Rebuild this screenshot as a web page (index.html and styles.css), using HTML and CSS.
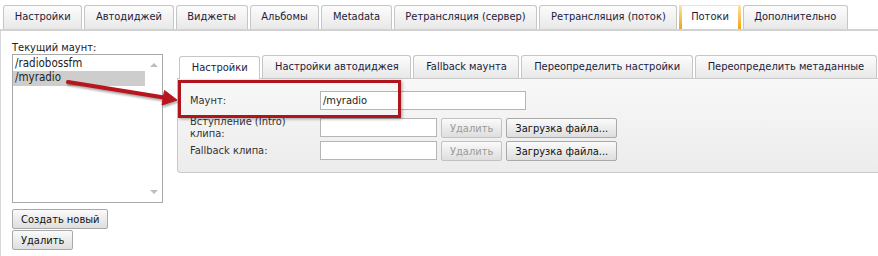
FILE: index.html
```html
<!DOCTYPE html>
<html>
<head>
    <meta charset="utf-8">
    <link rel="stylesheet" href="styles.css">
</head>
<body>
    <div class="page">
        <ul class="tabs main-tabs">
            <li>Настройки</li>
            <li>Автодиджей</li>
            <li>Виджеты</li>
            <li>Альбомы</li>
            <li>Metadata</li>
            <li>Ретрансляция (сервер)</li>
            <li>Ретрансляция (поток)</li>
            <li class="active">Потоки</li>
            <li>Дополнительно</li>
        </ul>

        <div class="tab-body">
            <div class="mounts">
                <div class="mounts-label">Текущий маунт:</div>
                <div class="listbox">
                    <div class="items">
                        <div class="item">/radiobossfm</div>
                        <div class="item selected">/myradio</div>
                    </div>
                    <div class="scroll">
                        <span class="arr up"></span>
                        <span class="arr down"></span>
                    </div>
                </div>
                <button class="btn">Создать новый</button>
                <button class="btn">Удалить</button>
            </div>

            <div class="mount-settings">
                <ul class="tabs sub-tabs">
                    <li class="active">Настройки</li>
                    <li>Настройки автодиджея</li>
                    <li>Fallback маунта</li>
                    <li>Переопределить настройки</li>
                    <li>Переопределить метаданные</li>
                </ul>
                <div class="panel">
                    <div class="row">
                        <label for="mount">Маунт:</label>
                        <input type="text" id="mount" class="wide" value="/myradio">
                    </div>
                    <div class="row">
                        <label for="intro">Вступление (Intro) клипа:</label>
                        <div class="field">
                            <input type="text" id="intro">
                            <button class="btn" disabled>Удалить</button>
                            <button class="btn">Загрузка файла...</button>
                        </div>
                    </div>
                    <div class="row">
                        <label for="fallback">Fallback клипа:</label>
                        <div class="field">
                            <input type="text" id="fallback">
                            <button class="btn" disabled>Удалить</button>
                            <button class="btn">Загрузка файла...</button>
                        </div>
                    </div>
                </div>
            </div>
        </div>

        <!-- annotation over the screenshot -->
        <div class="highlight"></div>
        <svg class="arrow" width="878" height="256" viewBox="0 0 878 256">
            <g fill="#b8161c" stroke="#b8161c">
                <line x1="68" y1="82" x2="164" y2="97.5" stroke-width="4" stroke-linecap="round"/>
                <polygon points="177,100 162,105 164.5,90.5" stroke-width="1" stroke-linejoin="round"/>
            </g>
        </svg>
    </div>
</body>
</html>
```

FILE: styles.css
```css
body {
    margin: 0;
    font-family: "DejaVu Sans Condensed", "DejaVu Sans", Verdana, sans-serif;
    font-size: 11px;
    color: #222;
    background-color: white;
}

.page {
    position: relative;
    width: 878px;
    height: 256px;
    overflow: hidden;
}

.tabs {
    list-style: none;
    margin: 0;
    display: flex;
    gap: 2px;
}

.tabs li {
    border: 1px solid #c6c6c6;
    border-bottom: none;
    border-radius: 3px 3px 0 0;
    background: linear-gradient(#fcfcfc, #e8e8e8);
    color: #1c1c3c;
    white-space: nowrap;
}

.main-tabs {
    padding: 5px 0 0 3px;
    border-bottom: 2px solid #d2d2d2;
}

.main-tabs li {
    height: 23px;
    line-height: 22px;
    padding: 0 10.7px;
}

.main-tabs li.active {
    background: white;
    border-left: 3px solid #f3a81c;
    border-right: 3px solid #f3a81c;
    border-image: linear-gradient(#fbe6a8, #f0a010) 1;
    border-top: 1px solid #c6c6c6;
    padding: 0 8.7px;
}

.tab-body {
    display: flex;
    gap: 14px;
    padding: 11px 0 0 11px;
    border-left: 1px solid #d8d8d8;
    height: 220px;
}

.mounts {
    width: 151px;
    flex: none;
}

.mounts-label {
    line-height: 12px;
    color: #222;
}

.listbox {
    display: flex;
    height: 147px;
    border: 1px solid #a8a8a8;
    margin-bottom: 6px;
    background: white;
}

.items {
    flex: 1;
    padding-top: 2px;
}

.item {
    height: 14px;
    line-height: 13px;
    padding-left: 2px;
    font-size: 11.5px;
    color: #222;
}

.item.selected {
    background-color: #cdcdcd;
    height: 15px;
}

.scroll {
    width: 17px;
    display: flex;
    flex-direction: column;
    justify-content: space-between;
    align-items: center;
    padding: 8px 0 8px;
}

.arr {
    width: 0;
    height: 0;
    border-left: 4px solid transparent;
    border-right: 4px solid transparent;
}

.arr.up {
    border-bottom: 4px solid #bdbdbd;
}

.arr.down {
    border-top: 4px solid #bdbdbd;
}

.btn {
    display: block;
    height: 20px;
    padding: 0 8px;
    margin-bottom: 1px;
    font-family: inherit;
    font-size: 11px;
    color: #111;
    background: linear-gradient(#fafafa, #dedede);
    border: 1px solid #a9a9a9;
    border-radius: 2px;
}

.btn:disabled {
    color: #9a9a9a;
    border-color: #c2c2c2;
}

.mount-settings {
    flex: 1;
    margin-top: 13px;
}

.sub-tabs {
    padding: 0 0 0 2px;
}

.sub-tabs li {
    height: 22px;
    line-height: 21px;
    padding: 0 11.7px;
}

.sub-tabs li.active {
    background: white;
    position: relative;
    top: 1px;
}

.panel {
    height: 69px;
    padding: 12px 12px 12px 12px;
    border: 1px solid #c9c9c9;
    border-right: none;
    border-radius: 0 0 0 4px;
    background: linear-gradient(#f8f8f8, #ececec);
    display: flex;
    flex-direction: column;
    gap: 6px;
}

.row {
    display: grid;
    grid-template-columns: 130px auto;
    align-items: center;
    height: 19px;
}

.row label {
    width: 120px;
    line-height: 12px;
    color: #333;
}

.row input {
    box-sizing: border-box;
    height: 19px;
    width: 117px;
    border: 1px solid #b5b5b5;
    padding: 0 2px;
    font-family: inherit;
    font-size: 11px;
    color: #222;
    background: white;
}

.row input.wide {
    width: 206px;
}

.field {
    display: flex;
    gap: 4px;
}

.field .btn {
    height: 20px;
    margin: 0;
}

.highlight {
    position: absolute;
    left: 178px;
    top: 80px;
    width: 217px;
    height: 32px;
    border: 3px solid #b0141c;
    box-shadow: 1px 1px 3px rgba(0, 0, 0, 0.35);
}

.arrow {
    position: absolute;
    left: 0;
    top: 0;
    filter: drop-shadow(1px 2px 1px rgba(0, 0, 0, 0.35));
}
```
